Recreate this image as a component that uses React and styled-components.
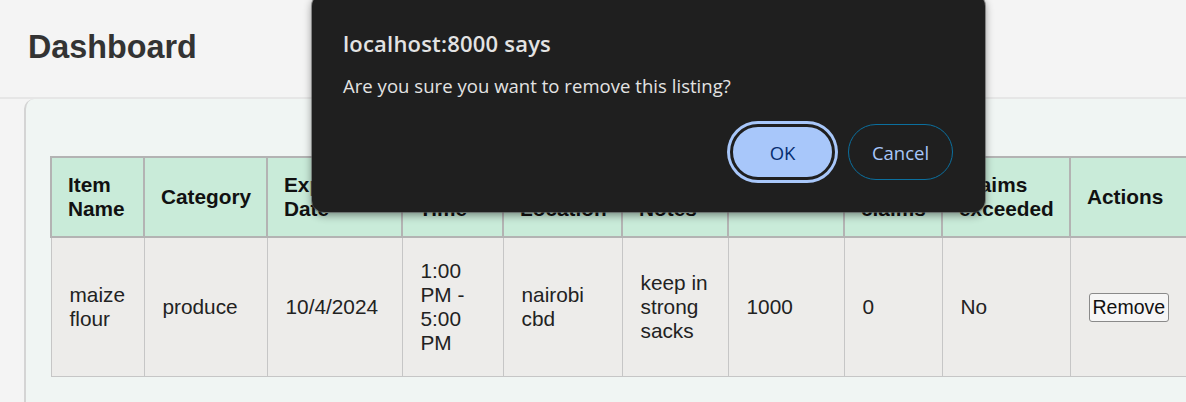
import styled, { createGlobalStyle } from "styled-components";

const GlobalStyle = createGlobalStyle`
  html, body {
    margin: 0;
    padding: 0;
    background: #f4f4f4;
    overflow: hidden;
  }
  body {
    font-family: "Liberation Sans", Arial, sans-serif;
    color: #222;
  }
`;

const columns = [
  { key: "name", title: "Item Name", width: 93 },
  { key: "category", title: "Category", width: 123 },
  { key: "expiry", title: "Expiry Date", width: 135 },
  { key: "time", title: "Pickup Time", width: 101 },
  { key: "location", title: "Pickup Location", width: 119 },
  { key: "notes", title: "Pickup Notes", width: 106 },
  { key: "quantity", title: "Quantity", width: 116 },
  { key: "claims", title: "Max claims", width: 98 },
  { key: "exceeded", title: "Claims exceeded", width: 128 },
  { key: "actions", title: "Actions", width: 125 },
];

const listings = [
  {
    id: 1,
    name: "maize flour",
    category: "produce",
    expiry: "10/4/2024",
    time: "1:00 PM - 5:00 PM",
    location: "nairobi cbd",
    notes: "keep in strong sacks",
    quantity: "1000",
    claims: "0",
    exceeded: "No",
  },
];

const App = () => {
  return (
    <>
      <GlobalStyle />
      <Page>
        <TopBar>
          <PageTitle>Dashboard</PageTitle>
        </TopBar>
        <Content>
          <Card>
            <Table>
              <colgroup>
                {columns.map((col) => (
                  <col key={col.key} style={{ width: col.width }} />
                ))}
              </colgroup>
              <thead>
                <tr>
                  {columns.map((col) => (
                    <Th key={col.key}>{col.title}</Th>
                  ))}
                </tr>
              </thead>
              <tbody>
                {listings.map((item) => (
                  <tr key={item.id}>
                    {columns.map((col) =>
                      col.key === "actions" ? (
                        <Td key={col.key}>
                          <RemoveButton>Remove</RemoveButton>
                        </Td>
                      ) : (
                        <Td key={col.key}>{item[col.key]}</Td>
                      )
                    )}
                  </tr>
                ))}
              </tbody>
            </Table>
          </Card>
        </Content>

        <Dialog>
          <DialogTitle>localhost:8000 says</DialogTitle>
          <DialogMessage>Are you sure you want to remove this listing?</DialogMessage>
          <DialogActions>
            <OkButton>OK</OkButton>
            <CancelButton>Cancel</CancelButton>
          </DialogActions>
        </Dialog>
      </Page>
    </>
  );
};

export default App;

const Page = styled.div`
  position: relative;
  width: 1186px;
  height: 402px;
  overflow: hidden;
`;

const TopBar = styled.header`
  display: flex;
  align-items: center;
  padding-left: 28px;
  border-bottom: 2px solid #e6e6e6;
  box-sizing: border-box;
  height: 99px;
`;

const PageTitle = styled.h1`
  margin: 0;
  font-size: 32.3px;
  font-weight: 700;
  color: #333;
  position: relative;
  top: -1px;
`;

const Content = styled.main`
  padding-left: 24px;
`;

const Card = styled.section`
  background: #f0f5f3;
  border-left: 2px solid #d4d4d4;
  border-top-left-radius: 10px;
  padding: 57px 0 40px 24px;
  width: 1300px;
`;

const Table = styled.table`
  border-collapse: collapse;
  table-layout: fixed;
  width: 1144px;
  font-size: 20.8px;
`;

const Th = styled.th`
  background: #c9ebd9;
  border: 2px solid #b3b3b3;
  padding: 15px 16px;
  text-align: left;
  font-weight: 700;
  color: #111;
  line-height: 24px;
  vertical-align: middle;
`;

const Td = styled.td`
  background: #edecea;
  border: 1px solid #c6c6c6;
  padding: 21px 18px;
  line-height: 24px;
  color: #222;
  vertical-align: middle;
`;

const RemoveButton = styled.button`
  font-family: "Liberation Sans", Arial, sans-serif;
  font-size: 19.5px;
  color: #111;
  background: #f6f6f6;
  border: 1px solid #8a8a8a;
  border-radius: 3px;
  padding: 1px 3px;
  line-height: 25px;
`;

const Dialog = styled.div`
  position: absolute;
  left: 312px;
  top: -6px;
  width: 673px;
  height: 218px;
  box-sizing: border-box;
  background: #1f1f1f;
  border-radius: 12px;
  box-shadow: 0 0 0 1px rgba(90, 90, 90, 0.6), 0 3px 8px rgba(0, 0, 0, 0.45);
  padding: 34px 32px 0 31px;
  display: flex;
  flex-direction: column;
  font-family: "Open Sans", "Noto Sans", sans-serif;
  color: #e3e3e3;
`;

const DialogTitle = styled.div`
  font-size: 22px;
  font-weight: 600;
  line-height: 30px;
  letter-spacing: 0.2px;
`;

const DialogMessage = styled.div`
  margin-top: 15px;
  font-size: 18.5px;
  line-height: 26px;
  letter-spacing: 0.04px;
`;

const DialogActions = styled.div`
  margin-top: 25px;
  display: flex;
  justify-content: flex-end;
  gap: 13px;
`;

const DialogButton = styled.button`
  width: 105px;
  height: 56px;
  border-radius: 28px;
  font-family: "Open Sans", "Noto Sans", sans-serif;
  font-size: 18.5px;
  font-weight: 500;
  box-sizing: border-box;
  cursor: pointer;
`;

const OkButton = styled(DialogButton)`
  background: #a8c7fa;
  color: #062e6f;
  border: 3px solid #1f1f1f;
  box-shadow: 0 0 0 3px #a8c7fa;
`;

const CancelButton = styled(DialogButton)`
  background: transparent;
  color: #a8c7fa;
  border: 1.5px solid #0b6f9e;
`;
